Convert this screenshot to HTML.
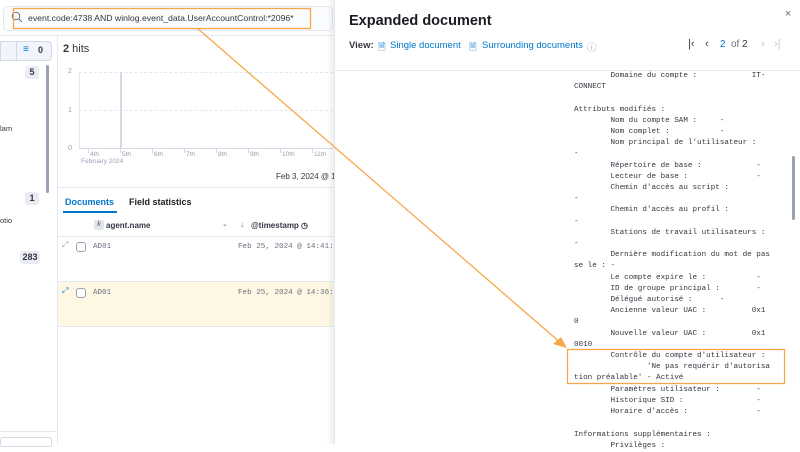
<!DOCTYPE html>
<html><head><meta charset="utf-8">
<style>
*{margin:0;padding:0;box-sizing:border-box}
body{width:800px;height:444px;overflow:hidden;background:#fff;font-family:"Liberation Sans",sans-serif;position:relative;color:#343741}
.a{position:absolute;white-space:nowrap}
pre.a{white-space:pre}
.badge{position:absolute;background:#e9edf3;border-radius:3px;font-size:9px;font-weight:bold;color:#343741;text-align:center;line-height:13px;height:13px}
.tick{position:absolute;top:148px;width:1px;height:5px;background:#d3dae6}
.tl{position:absolute;top:151px;font-size:6.5px;color:#98a2b3}
pre{font-family:"Liberation Mono",monospace;font-size:7.6px;line-height:11.2px;color:#343741}
.v{position:absolute;top:40px;font-size:9.5px;color:#07c;white-space:nowrap}
.p{position:absolute;top:38px;font-size:11px;white-space:nowrap}
</style></head><body>
<div class="a" style="left:0;top:0;width:333px;height:36px;background:#fff;border-bottom:1px solid #e3e8ef"></div>
<div class="a" style="left:3px;top:6px;width:330px;height:25px;background:#fbfcfd;border:1px solid #e3e8ef;border-radius:5px"></div>
<svg class="a" style="left:11px;top:11px" width="12" height="12" viewBox="0 0 12 12"><circle cx="5" cy="5" r="3.8" fill="none" stroke="#69707d" stroke-width="1"/><path d="M8 8 L11 11" stroke="#69707d" stroke-width="1"/></svg>
<div class="a" style="left:28px;top:13px;font-size:8.7px;color:#343741">event.code:4738 AND winlog.event_data.UserAccountControl:*2096*</div>
<div class="a" style="left:57px;top:36px;width:1px;height:408px;background:#e3e8ef"></div>
<div class="a" style="left:0;top:41px;width:52px;height:20px;background:#f1f4fa;border:1px solid #d3dae6;border-radius:0 4px 4px 0"></div>
<div class="a" style="left:16px;top:41px;width:1px;height:20px;background:#d3dae6"></div>
<div class="a" style="left:23px;top:44px;font-size:10px;color:#07c">≡</div>
<div class="a" style="left:38px;top:45px;font-size:9px;font-weight:bold">0</div>
<div class="badge" style="left:25px;top:66px;width:14px">5</div>
<div class="a" style="left:46px;top:65px;width:3px;height:128px;background:#98a2b3;border-radius:2px"></div>
<div class="a" style="left:0;top:124px;font-size:7.5px">lam</div>
<div class="badge" style="left:25px;top:192px;width:14px">1</div>
<div class="a" style="left:0;top:216px;font-size:7.5px">otio</div>
<div class="badge" style="left:20px;top:251px;width:20px">283</div>
<div class="a" style="left:0;top:431px;width:57px;height:1px;background:#e3e8ef"></div>
<div class="a" style="left:0;top:437px;width:52px;height:10px;border:1px solid #d3dae6;border-radius:3px"></div>
<div class="a" style="left:63px;top:43px;font-size:11px"><b>2</b> hits</div>
<div class="a" style="left:68px;top:68px;font-size:7px;color:#98a2b3">2</div>
<div class="a" style="left:68px;top:107px;font-size:7px;color:#98a2b3">1</div>
<div class="a" style="left:68px;top:145px;font-size:7px;color:#98a2b3">0</div>
<div class="a" style="left:79px;top:72px;width:254px;border-top:1px dashed #e3e8ef"></div>
<div class="a" style="left:79px;top:110px;width:254px;border-top:1px dashed #e3e8ef"></div>
<div class="a" style="left:79px;top:72px;width:1px;height:77px;background:#e3e8ef"></div>
<div class="a" style="left:79px;top:148px;width:254px;height:1px;background:#d3dae6"></div>
<div class="a" style="left:120px;top:72px;width:2px;height:77px;background:#d3dae6"></div>
<div class="tick" style="left:88px"></div><div class="tl" style="left:90px">4th</div>
<div class="tick" style="left:120px"></div><div class="tl" style="left:122px">5th</div>
<div class="tick" style="left:152px"></div><div class="tl" style="left:154px">6th</div>
<div class="tick" style="left:184px"></div><div class="tl" style="left:186px">7th</div>
<div class="tick" style="left:216px"></div><div class="tl" style="left:218px">8th</div>
<div class="tick" style="left:248px"></div><div class="tl" style="left:250px">9th</div>
<div class="tick" style="left:280px"></div><div class="tl" style="left:282px">10th</div>
<div class="tick" style="left:312px"></div><div class="tl" style="left:314px">11th</div>
<div class="tl" style="left:81px;top:158px">February 2024</div>
<div class="a" style="left:276px;top:172px;font-size:8px">Feb 3, 2024 @ 1</div>
<div class="a" style="left:58px;top:187px;width:275px;height:1px;background:#e3e8ef"></div>
<div class="a" style="left:65px;top:197px;font-size:9px;font-weight:bold;color:#07c">Documents</div>
<div class="a" style="left:63px;top:211px;width:54px;height:2px;background:#07c"></div>
<div class="a" style="left:129px;top:197px;font-size:9px;font-weight:bold;color:#1a1c21">Field statistics</div>
<div class="a" style="left:94px;top:220px;width:10px;height:10px;background:#e0e5ee;border-radius:2px;font-size:7px;text-align:center;line-height:10px;color:#555;font-style:italic">k</div>
<div class="a" style="left:106px;top:221px;font-size:8px;font-weight:bold">agent.name</div>
<div class="a" style="left:222px;top:220px;font-size:7px;color:#69707d">⌄</div>
<div class="a" style="left:240px;top:220px;font-size:8px;color:#69707d">↓</div>
<div class="a" style="left:251px;top:221px;font-size:8px;font-weight:bold">@timestamp ◷</div>
<div class="a" style="left:58px;top:236px;width:275px;height:1px;background:#e3e8ef"></div>
<div class="a" style="left:62px;top:240px;font-size:8px;color:#98a2b3">⤢</div>
<div class="a" style="left:76px;top:242px;width:10px;height:10px;border:1px solid #98a2b3;border-radius:3px;background:#fff"></div>
<pre class="a" style="left:93px;top:242px;color:#69707d">AD01</pre>
<pre class="a" style="left:238px;top:242px;color:#69707d">Feb 25, 2024 @ 14:41:3</pre>
<div class="a" style="left:58px;top:281px;width:275px;height:46px;background:#fdf7e4;border-top:1px solid #e3e8ef;border-bottom:1px solid #e3e8ef"></div>
<div class="a" style="left:62px;top:286px;font-size:8px;color:#07c">⤢</div>
<div class="a" style="left:76px;top:288px;width:10px;height:10px;border:1px solid #98a2b3;border-radius:3px;background:#fff"></div>
<pre class="a" style="left:93px;top:288px;color:#69707d">AD01</pre>
<pre class="a" style="left:238px;top:288px;color:#69707d">Feb 25, 2024 @ 14:36:5</pre>
<div class="a" style="left:327px;top:0;width:8px;height:444px;background:linear-gradient(to right,rgba(0,0,0,0),rgba(0,0,0,0.08))"></div>
<div class="a" style="left:334px;top:0;width:466px;height:444px;background:#fff;border-left:1px solid #e3e8ef"></div>
<div class="a" style="left:785px;top:8px;font-size:11px;color:#69707d">×</div>
<div class="a" style="left:349px;top:13px;font-size:14.5px;font-weight:bold;color:#1a1c21">Expanded document</div>
<div class="a" style="left:349px;top:40px;font-size:9.5px;font-weight:bold;color:#343741">View:</div>
<div class="v" style="left:378px">🗎</div><div class="v" style="left:390px">Single document</div>
<div class="v" style="left:469px">🗎</div><div class="v" style="left:482px">Surrounding documents</div>
<div class="v" style="left:587px;color:#98a2b3">ⓘ</div>
<div class="p" style="left:688px;color:#343741">|‹</div>
<div class="p" style="left:705px;color:#343741">‹</div>
<div class="p" style="left:720px;color:#07c;font-size:10px;top:39px">2</div>
<div class="p" style="left:731px;color:#69707d;font-size:10px;top:39px">of</div>
<div class="p" style="left:742px;color:#343741;font-size:10px;top:39px">2</div>
<div class="p" style="left:761px;color:#c2c7d0">›</div>
<div class="p" style="left:774px;color:#c2c7d0">›|</div>
<div class="a" style="left:334px;top:70px;width:466px;height:1px;background:#e3e8ef"></div>
<div class="a" style="left:792px;top:156px;width:3px;height:64px;background:#98a2b3;border-radius:2px"></div>
<pre class="a" style="left:574px;top:71px">        Domaine du compte :            IT-
CONNECT

Attributs modifiés :
        Nom du compte SAM :     -
        Nom complet :           -
        Nom principal de l'utilisateur :
-
        Répertoire de base :            -
        Lecteur de base :               -
        Chemin d'accès au script :
-
        Chemin d'accès au profil :
-
        Stations de travail utilisateurs :
-
        Dernière modification du mot de pas
se le : -
        Le compte expire le :           -
        ID de groupe principal :        -
        Délégué autorisé :      -
        Ancienne valeur UAC :          0x1
0
        Nouvelle valeur UAC :          0x1
0010
        Contrôle du compte d'utilisateur :
                'Ne pas requérir d'autorisa
tion préalable' - Activé
        Paramètres utilisateur :        -
        Historique SID :                -
        Horaire d'accès :               -

Informations supplémentaires :
        Privilèges :</pre>
<svg class="a" style="left:0;top:0" width="800" height="444" viewBox="0 0 800 444">
<rect x="13.5" y="8.5" width="297" height="20" fill="none" stroke="#f7a64a" stroke-width="1.3"/>
<rect x="567.5" y="349.5" width="217" height="34" fill="none" stroke="#f7a64a" stroke-width="1.3"/>
<path d="M197 28 L562 344" stroke="#f7a64a" stroke-width="1.3" fill="none"/>
<path d="M567 348 L553 344 L561 337 Z" fill="#f7a64a"/>
</svg>
</body></html>
